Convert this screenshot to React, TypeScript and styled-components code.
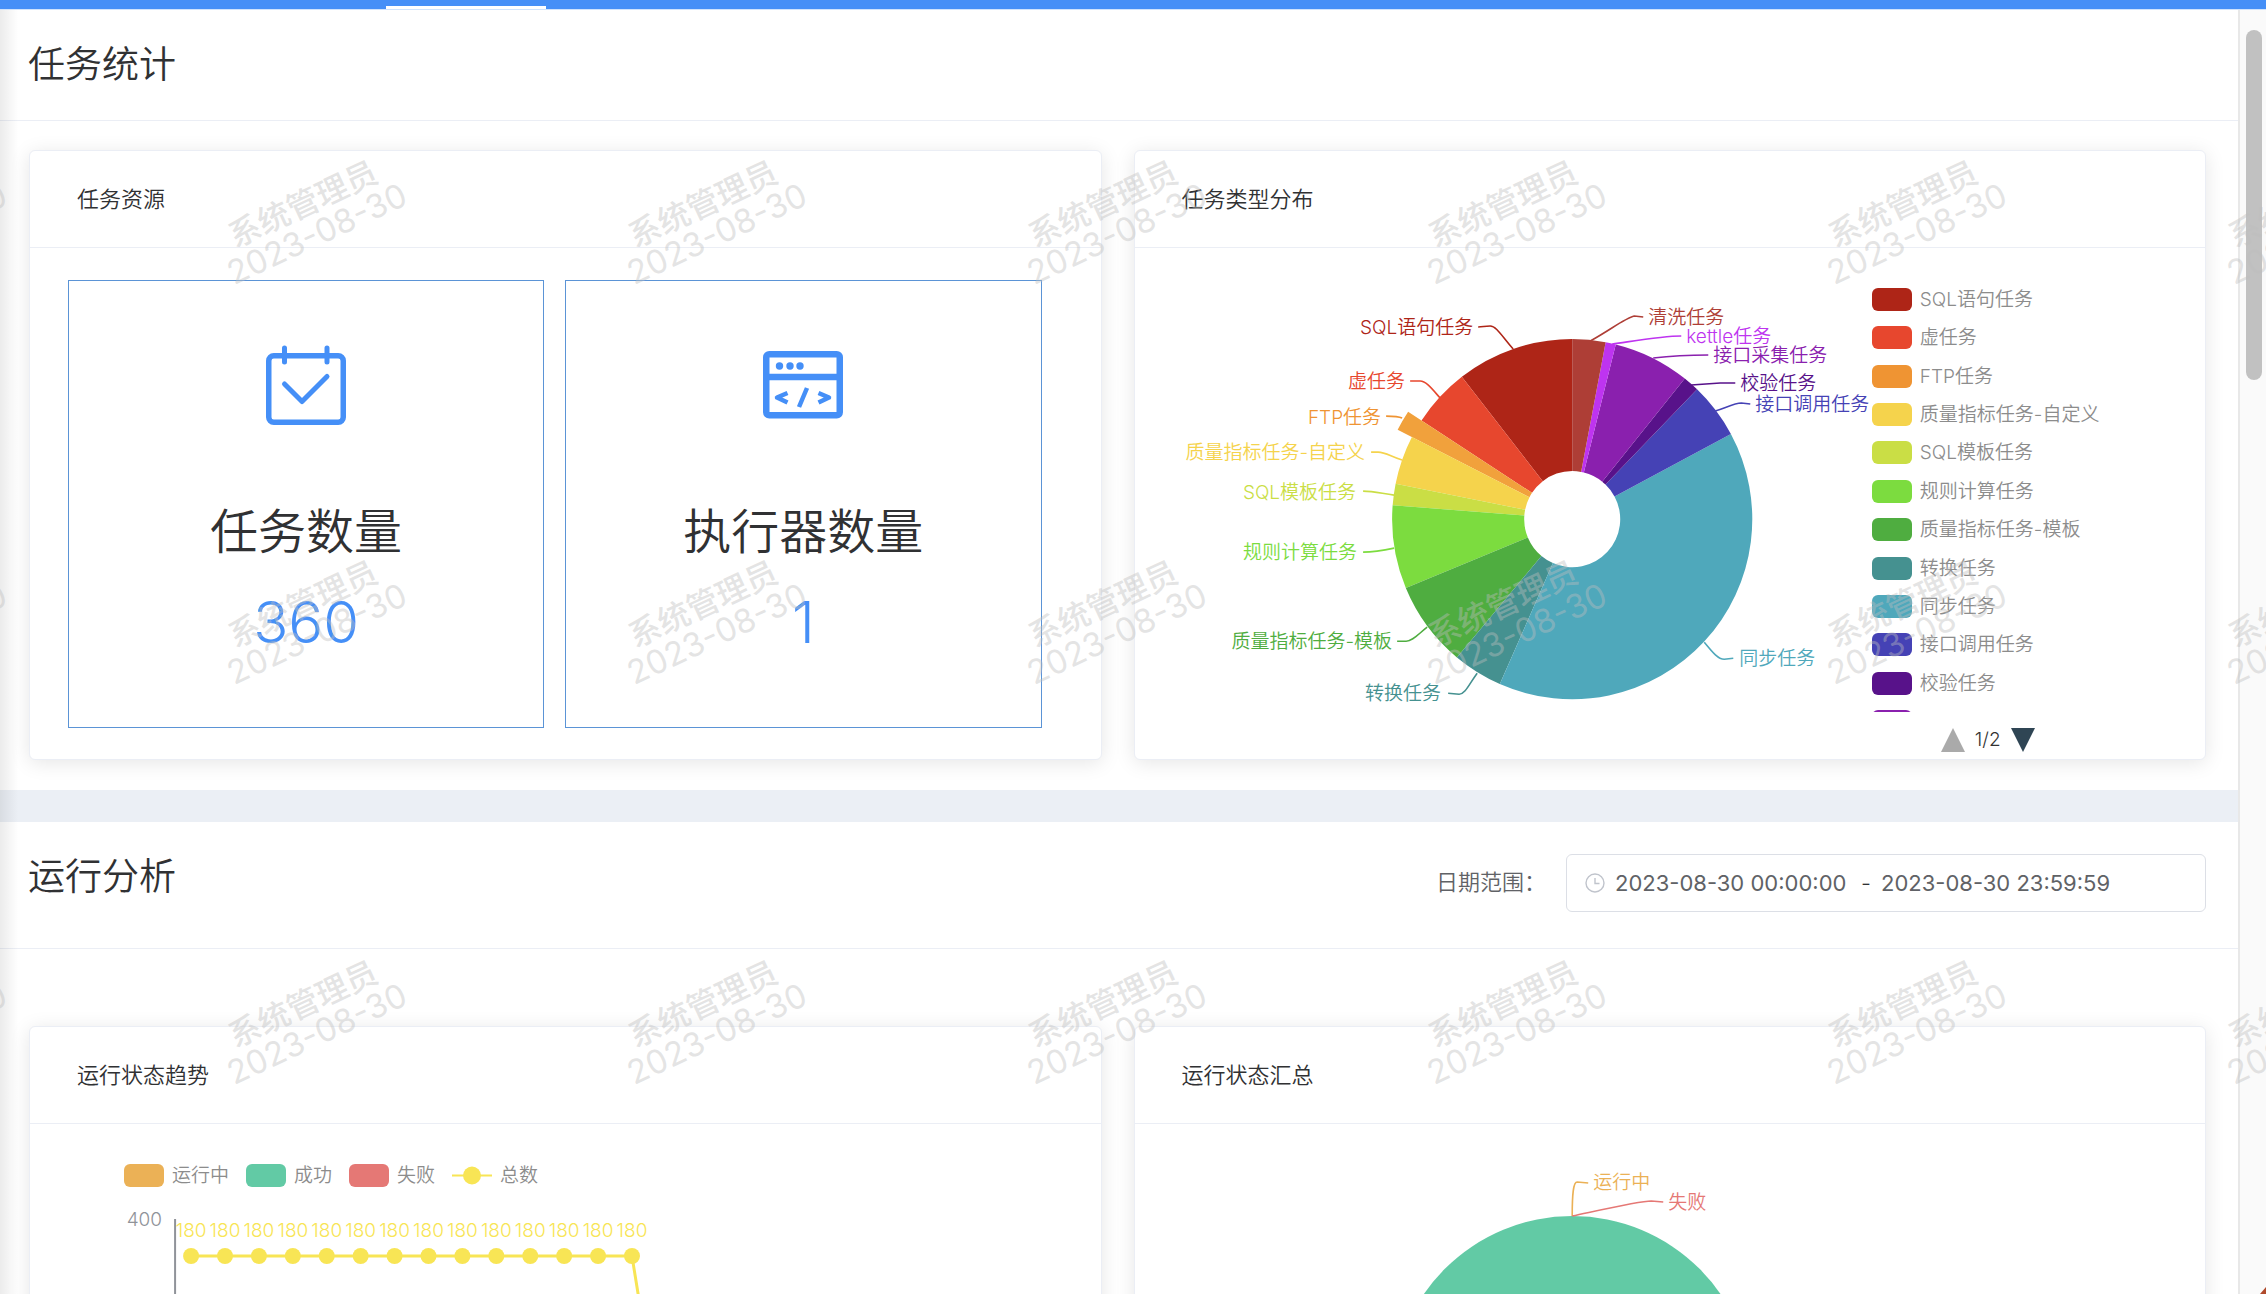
import React from 'react';
import styled, { createGlobalStyle } from 'styled-components';

const SANS = 'Inter, "Noto Sans CJK SC", sans-serif';

const GlobalStyle = createGlobalStyle`
  *, *::before, *::after { box-sizing: border-box; }
  body { margin: 0; background: #fff; color: #303133; font-family: ${SANS}; font-weight: 350; overflow: hidden; }
  h1, h2, p, ul { margin: 0; padding: 0; font-weight: inherit; list-style: none; }
`;

const Shell = styled.div`
  position: relative;
  display: flex;
  flex-direction: column;
  height: 100vh;
  overflow: hidden;
`;

const TopBar = styled.header`
  flex: none;
  display: flex;
  align-items: flex-end;
  height: 10px;
  padding-left: 386px;
  background: #458ff7;
  border-bottom: 1px solid #cfe3fd;
`;

const ActiveTab = styled.span`
  width: 160px;
  height: 3px;
  background: #fff;
`;

const Body = styled.div`
  flex: 1;
  display: flex;
  min-height: 0;
`;

const Content = styled.main`
  position: relative;
  flex: 1;
  min-width: 0;
  overflow: hidden;
`;

const SideShade = styled.div`
  position: absolute;
  inset: 0 auto 0 0;
  width: 18px;
  background: linear-gradient(90deg, rgba(0, 0, 0, 0.08), rgba(0, 0, 0, 0));
  pointer-events: none;
`;

const ScrollTrack = styled.div`
  flex: none;
  width: 28px;
  padding: 20px 4px 0 6px;
  background: #fafafa;
  border-left: 2px solid #e8e8e8;
`;

const ScrollThumb = styled.div`
  height: 350px;
  border-radius: 8px;
  background: #c1c1c1;
`;

const SectionHead = styled.div`
  display: flex;
  justify-content: space-between;
  align-items: flex-start;
  padding: 0 32px 0 28px;
  border-bottom: 1px solid #ebeef5;
`;

const SectionTitle = styled.h1`
  font-size: 37px;
  line-height: 110px;
`;

const Band = styled.div`
  height: 32px;
  background: #ebeff5;
`;

const Cards = styled.div<{ $top: number }>`
  display: grid;
  grid-template-columns: 1fr 1fr;
  gap: 32px;
  padding: ${(p) => p.$top}px 32px 30px 29px;
`;

const Card = styled.section`
  min-width: 0;
  background: #fff;
  border: 1px solid #ebeef5;
  border-radius: 6px;
  box-shadow: 0 3px 20px rgba(0, 0, 0, 0.1);
`;

const CardTitle = styled.h2`
  padding: 0 47px;
  font-size: 22px;
  line-height: 96px;
  border-bottom: 1px solid #ebeef5;
`;

const Stats = styled.div`
  display: grid;
  grid-template-columns: 1fr 1fr;
  gap: 21px;
  padding: 32px 59px 31px 38px;
`;

const Stat = styled.div`
  display: flex;
  flex-direction: column;
  align-items: center;
  height: 448px;
  padding-top: 64px;
  border: 1px solid #5b94d6;
`;

const StatName = styled.p`
  margin-top: 71px;
  font-size: 48px;
  line-height: 72px;
`;

const StatValue = styled.p`
  margin-top: 19px;
  font-size: 58px;
  line-height: 70px;
  color: #458ff7;
`;

const TypeBody = styled.div`
  display: grid;
  grid-template-columns: 737fr 333fr;
`;

const Chart = styled.svg`
  display: block;
  width: 100%;
  height: auto;
  font-family: ${SANS};
  font-size: 19px;
`;

const LegendSide = styled.div`
  padding-top: 40px;
`;

const LegendClip = styled.div`
  height: 424px;
  overflow: hidden;
`;

const LegendList = styled.ul`
  display: flex;
  flex-direction: column;
  justify-content: space-between;
  height: 445px;
`;

const LegendRow = styled.li`
  display: flex;
  align-items: center;
  gap: 8px;
  font-size: 19px;
  line-height: 23px;
  color: #8c8c8c;
  white-space: nowrap;
`;

const Swatch = styled.span<{ $color: string }>`
  width: 40px;
  height: 23px;
  border-radius: 6px;
  background: ${(p) => p.$color};
`;

const Pager = styled.div`
  display: flex;
  align-items: center;
  gap: 10px;
  padding: 16px 0 0 69px;
  font-size: 19px;
  line-height: 24px;
  color: #333;
`;

const PageButton = styled.button`
  display: flex;
  padding: 0;
  border: 0;
  background: none;
`;

const RangeForm = styled.form`
  display: flex;
  align-items: flex-start;
  gap: 20px;
  padding: 32px 0 36px;
  color: #606266;
  font-size: 22px;
  line-height: 56px;
`;

const RangeBox = styled.div`
  display: flex;
  align-items: center;
  gap: 10px;
  width: 640px;
  height: 58px;
  padding: 0 18px;
  border: 1px solid #dcdfe6;
  border-radius: 6px;
  color: #303133;
`;

const RangeInput = styled.input`
  width: 236px;
  height: 54px;
  padding: 0;
  border: 0;
  outline: 0;
  background: none;
  color: #606266;
  font: 22px ${SANS};
`;

const TrendLegend = styled.ul`
  display: flex;
  gap: 17px;
  padding: 40px 0 0 94px;
`;

const Overlay = styled.div`
  position: absolute;
  inset: 0;
  overflow: hidden;
  pointer-events: none;
`;

const MarkGrid = styled.div`
  display: grid;
  grid-template-columns: repeat(7, 400px);
  grid-auto-rows: 400px;
  margin-left: -400px;
`;

const MarkCell = styled.div`
  display: flex;
  align-items: center;
  justify-content: center;
  padding: 38px 0 0 220px;
`;

const Mark = styled.div`
  font-size: 32px;
  font-weight: 500;
  line-height: 32px;
  text-align: center;
  white-space: nowrap;
  color: rgba(190, 190, 190, 0.42);
  transform: rotate(-25deg);
`;

const MarkDate = styled.div`
  font-size: 33px;
  font-weight: 400;
`;

const CornerBadge = styled.svg`
  position: absolute;
  right: 0;
  bottom: 0;
`;

type Slice = { name: string; color: string; from: number; to: number; r?: number; fill?: string; x: number; y: number; line: string };

const CX = 437;
const CY = 271;

const slices: Slice[] = [
  { name: 'SQL语句任务', color: '#ae2517', from: 322.2, to: 360, x: 338, y: 79, line: 'M378 101 C366 87 361 78 355 78 S348 79 343 79' },
  { name: '虚任务', color: '#e7472e', from: 303.2, to: 322.2, x: 270, y: 133, line: 'M305 150 C297 141 291 133 285 133 S279 133 275 133' },
  { name: 'FTP任务', color: '#ef9433', fill: '#f1a13c', from: 297.1, to: 303.2, r: 196, x: 246, y: 169, line: 'M267 170 C263 168 260 168 251 168' },
  { name: '质量指标任务-自定义', color: '#f5d34c', from: 281.3, to: 297.1, x: 230, y: 204, line: 'M267 212 C255 208 250 204 243 204 L236 204' },
  { name: 'SQL模板任务', color: '#cade45', from: 274.4, to: 281.3, x: 221, y: 244, line: 'M259 247 C245 245 238 243 228 243' },
  { name: '规则计算任务', color: '#7cdc3f', from: 247.5, to: 274.4, x: 222, y: 304, line: 'M259 300 C245 303 238 304 228 304' },
  { name: '质量指标任务-模板', color: '#4fad40', from: 219.8, to: 247.5, x: 257, y: 393, line: 'M292 379 C282 387 277 393 271 393 L262 393' },
  { name: '转换任务', color: '#459190', from: 203.7, to: 219.8, x: 306, y: 445, line: 'M342 425 C334 436 330 446 324 446 L313 445' },
  { name: '同步任务', color: '#4fa8bb', from: 61.8, to: 203.7, x: 604, y: 410, line: 'M569 394 C578 405 583 411 589 411 L598 410' },
  { name: '接口调用任务', color: '#4542b5', from: 43.9, to: 61.8, x: 620, y: 156, line: 'M580 163 C592 159 600 155 606 155 L615 156' },
  { name: '校验任务', color: '#58128a', from: 38.7, to: 43.9, x: 605, y: 135, line: 'M556 137 L585 135 L600 135' },
  { name: '接口采集任务', color: '#8a20ae', from: 14, to: 38.7, x: 578, y: 107, line: 'M518 110 C535 108 550 107 573 107' },
  { name: 'kettle任务', color: '#be34f0', from: 10.7, to: 14, x: 551, y: 88, line: 'M477 96 C505 92 528 88 546 88' },
  { name: '清洗任务', color: '#ae3e36', from: 0, to: 10.7, x: 513, y: 69, line: 'M455 93 C475 82 490 70 499 68 L508 69' },
];

// The first legend page fits eleven full rows; the twelfth only peeks in.
const fullRows = 11;

function ringPath(from: number, to: number, r: number) {
  const at = (deg: number, radius: number) => {
    const t = (deg * Math.PI) / 180;
    return `${(CX + radius * Math.sin(t)).toFixed(2)} ${(CY - radius * Math.cos(t)).toFixed(2)}`;
  };
  const big = to - from > 180 ? 1 : 0;
  return `M${at(from, 48)} L${at(from, r)} A${r} ${r} 0 ${big} 1 ${at(to, r)} L${at(to, 48)} A48 48 0 ${big} 0 ${at(from, 48)} Z`;
}

function TypeChart() {
  return (
    <Chart viewBox="0 0 737 511" role="img" aria-label="任务类型分布">
      {slices.map((s) => (
        <path key={s.name} d={ringPath(s.from, s.to, s.r ?? 180)} fill={s.fill ?? s.color} />
      ))}
      {slices.map((s) => (
        <g key={s.name}>
          <path d={s.line} fill="none" stroke={s.color} strokeWidth="1.6" />
          <text x={s.x} y={s.y + 7} fill={s.color} textAnchor={s.x < CX ? 'end' : 'start'}>
            {s.name}
          </text>
        </g>
      ))}
    </Chart>
  );
}

const trendX = Array.from({ length: 14 }, (_, i) => 161 + i * 33.9);

function TrendChart() {
  return (
    <Chart viewBox="0 0 1070 400" role="img" aria-label="运行状态趋势">
      <text x="132" y="39" textAnchor="end" fill="#909399">400</text>
      <path d="M145 32 V400" stroke="#909399" strokeWidth="2" />
      <path d={`M161 69 H${trendX[13]} L635 275 H1000`} fill="none" stroke="#f8e555" strokeWidth="3" />
      {trendX.map((x) => (
        <g key={x}>
          <circle cx={x} cy="69" r="8" fill="#f8e555" />
          <text x={x} y="50" textAnchor="middle" fill="#f8e555">180</text>
        </g>
      ))}
    </Chart>
  );
}

function SummaryChart() {
  return (
    <Chart viewBox="0 0 1070 512" role="img" aria-label="运行状态汇总">
      <circle cx="437" cy="272" r="180" fill="#62caa5" />
      <path d="M437 92 C437 70 438 58 442 58 L453 59" fill="none" stroke="#ebb156" strokeWidth="1.6" />
      <path d="M437 92 C470 85 505 77 516 77 L528 78" fill="none" stroke="#e57875" strokeWidth="1.6" />
      <text x="458" y="65" fill="#ebb156">运行中</text>
      <text x="533" y="85" fill="#e57875">失败</text>
    </Chart>
  );
}

function TaskIcon() {
  return (
    <svg width="80" height="80" viewBox="0 0 80 80" fill="none" stroke="#458ff7" strokeWidth="5.500" strokeLinecap="round" strokeLinejoin="round">
      <rect x="2.750" y="10.750" width="74.500" height="66.500" rx="5" />
      <path d="M18.500 3 V17 M61 3 V17 M18.500 39 L36 56.500 L61 31.500" strokeWidth="5" />
    </svg>
  );
}

function ExecutorIcon() {
  return (
    <svg width="80" height="80" viewBox="0 0 80 80" fill="none" stroke="#458ff7" strokeWidth="6.500">
      <rect x="3.250" y="9.250" width="73.500" height="61" rx="3" />
      <path d="M3 32 H77" />
      <g fill="#458ff7" stroke="none">
        <circle cx="16.500" cy="21" r="3.700" />
        <circle cx="27" cy="21" r="3.700" />
        <circle cx="37" cy="21" r="3.700" />
      </g>
      <path d="M24.500 48 L14 52.500 L24.500 57.500 M55.500 48 L66 52.500 L55.500 57.500 M44 43 L36 62" strokeWidth="4.500" strokeLinejoin="round" />
    </svg>
  );
}

function ClockIcon() {
  return (
    <svg width="20" height="20" viewBox="0 0 20 20" fill="none" stroke="#c0c4cc" strokeWidth="1.400">
      <circle cx="10" cy="10" r="9" />
      <path d="M10 5 V10.500 H14.500" />
    </svg>
  );
}

export default function App() {
  return (
    <>
      <GlobalStyle />
      <Shell>
        <TopBar>
          <ActiveTab />
        </TopBar>
        <Body>
          <Content>
            <SectionHead>
              <SectionTitle>任务统计</SectionTitle>
            </SectionHead>
            <Cards $top={29}>
              <Card>
                <CardTitle>任务资源</CardTitle>
                <Stats>
                  <Stat>
                    <TaskIcon />
                    <StatName>任务数量</StatName>
                    <StatValue>360</StatValue>
                  </Stat>
                  <Stat>
                    <ExecutorIcon />
                    <StatName>执行器数量</StatName>
                    <StatValue>1</StatValue>
                  </Stat>
                </Stats>
              </Card>
              <Card>
                <CardTitle>任务类型分布</CardTitle>
                <TypeBody>
                  <TypeChart />
                  <LegendSide>
                    <LegendClip>
                      <LegendList>
                        {slices.slice(0, fullRows + 1).map((s, i) => (
                          <LegendRow key={s.name}>
                            <Swatch $color={s.color} />
                            {i < fullRows && s.name}
                          </LegendRow>
                        ))}
                      </LegendList>
                    </LegendClip>
                    <Pager>
                      <PageButton type="button" aria-label="上一页">
                        <svg width="24" height="24" viewBox="0 0 24 24"><path d="M12 0 L24 24 H0 Z" fill="#aaa" /></svg>
                      </PageButton>
                      <span>1/2</span>
                      <PageButton type="button" aria-label="下一页">
                        <svg width="24" height="24" viewBox="0 0 24 24"><path d="M0 0 H24 L12 24 Z" fill="#2f4554" /></svg>
                      </PageButton>
                    </Pager>
                  </LegendSide>
                </TypeBody>
              </Card>
            </Cards>
            <Band />
            <SectionHead>
              <SectionTitle>运行分析</SectionTitle>
              <RangeForm>
                <label htmlFor="range-start">日期范围：</label>
                <RangeBox>
                  <ClockIcon />
                  <RangeInput id="range-start" defaultValue="2023-08-30 00:00:00" />
                  <span>-</span>
                  <RangeInput aria-label="结束日期" defaultValue="2023-08-30 23:59:59" />
                </RangeBox>
              </RangeForm>
            </SectionHead>
            <Cards $top={77}>
              <Card>
                <CardTitle>运行状态趋势</CardTitle>
                <TrendLegend>
                  <LegendRow><Swatch $color="#ebb156" />运行中</LegendRow>
                  <LegendRow><Swatch $color="#62caa5" />成功</LegendRow>
                  <LegendRow><Swatch $color="#e57875" />失败</LegendRow>
                  <LegendRow>
                    <svg width="40" height="23" viewBox="0 0 40 23">
                      <path d="M0 11.500 H40" stroke="#f8e555" strokeWidth="2" />
                      <circle cx="20" cy="11.500" r="9" fill="#f8e555" />
                    </svg>
                    总数
                  </LegendRow>
                </TrendLegend>
                <TrendChart />
              </Card>
              <Card>
                <CardTitle>运行状态汇总</CardTitle>
                <SummaryChart />
              </Card>
            </Cards>
            <SideShade />
          </Content>
          <ScrollTrack>
            <ScrollThumb />
          </ScrollTrack>
        </Body>
        <Overlay aria-hidden="true">
          <MarkGrid>
            {Array.from({ length: 21 }, (_, i) => (
              <MarkCell key={i}>
                <Mark>
                  系统管理员
                  <MarkDate>2023-08-30</MarkDate>
                </Mark>
              </MarkCell>
            ))}
          </MarkGrid>
          <CornerBadge width="6" height="7" viewBox="0 0 6 7">
            <path d="M6 0 L0 7 H6 Z" fill="#b04a2c" />
          </CornerBadge>
        </Overlay>
      </Shell>
    </>
  );
}
